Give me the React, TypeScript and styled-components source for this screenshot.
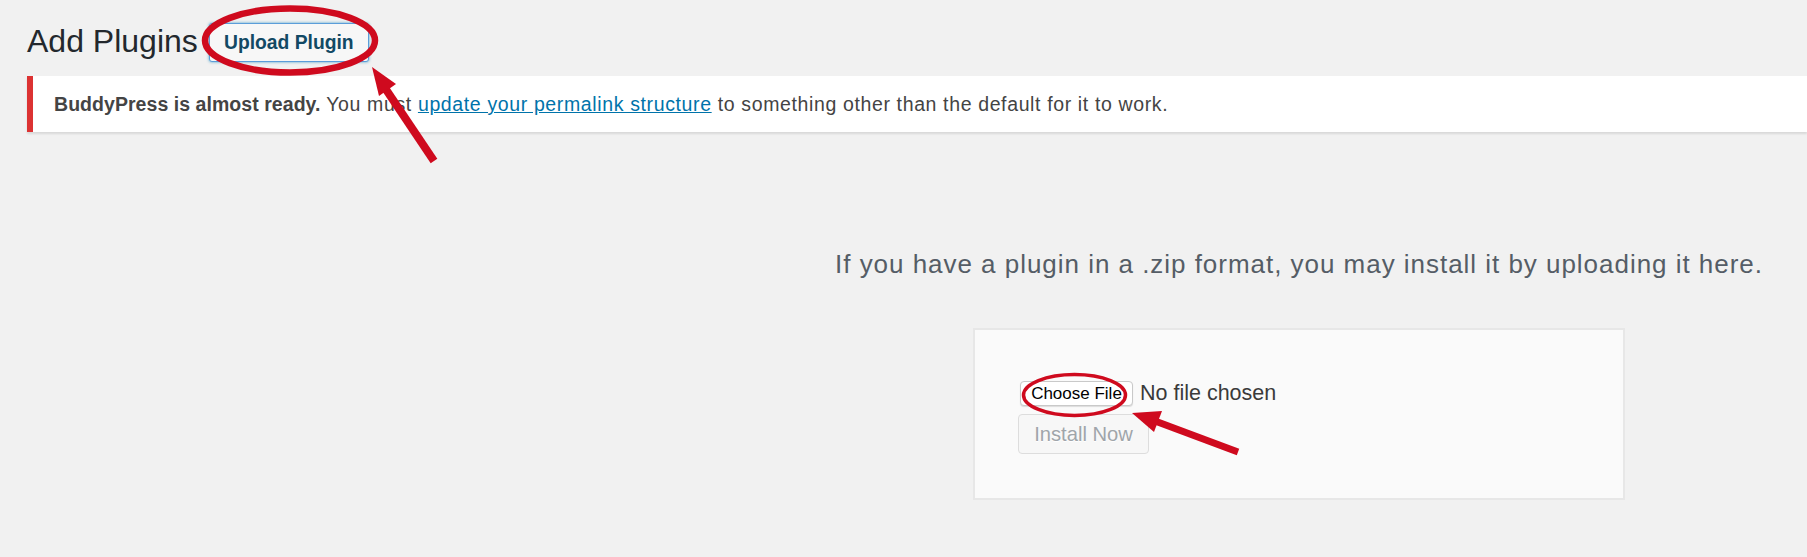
import React from "react";
import styled, { createGlobalStyle } from "styled-components";

const GlobalStyle = createGlobalStyle`
  html, body {
    margin: 0;
    padding: 0;
    background: #f1f1f1;
  }
  body {
    font-family: "Liberation Sans", Arial, Helvetica, sans-serif;
    color: #444;
  }
  * { box-sizing: border-box; }
`;

const Page = styled.div`
  position: relative;
  min-height: 557px;
  padding: 23px 0 0 27px;
  overflow: hidden;
`;

const TitleRow = styled.div`
  display: flex;
  align-items: center;
  height: 39px;
`;

const Title = styled.h1`
  margin: 0;
  font-size: 32px;
  font-weight: 400;
  line-height: 39px;
  color: #23282d;
  position: relative;
  top: -1px;
`;

const TitleAction = styled.button`
  margin-left: 11px;
  height: 39px;
  width: 160px;
  padding: 0;
  font-family: inherit;
  font-size: 19.3px;
  font-weight: 700;
  color: #124964;
  background: #f7f7f7;
  border: 1.5px solid #5b9dd9;
  border-radius: 3px;
  box-shadow: 0 0 3px rgba(30, 140, 190, 0.8);
  cursor: pointer;
`;

const Notice = styled.div`
  margin-top: 14px;
  height: 56px;
  background: #fff;
  border-left: 6px solid #dc3232;
  box-shadow: 0 2px 2px rgba(0, 0, 0, 0.1);
  padding: 14px 21px 0;
`;

const NoticeText = styled.p`
  margin: 0;
  font-size: 19.5px;
  line-height: 29px;
  color: #444;
  white-space: nowrap;
  letter-spacing: 0.63px;

  strong {
    font-weight: 700;
    letter-spacing: 0.05px;
  }
  a {
    color: #0073aa;
    text-decoration: underline;
  }
`;

const UploadSection = styled.section`
  padding-left: 764px;
  display: flex;
  flex-direction: column;
  align-items: center;
`;

const HelpText = styled.p`
  margin: 113px 0 0;
  font-size: 26px;
  letter-spacing: 0.97px;
  line-height: 38px;
  color: #555d66;
  white-space: nowrap;
  text-align: center;
`;

const UploadForm = styled.form`
  margin-top: 45px;
  width: 652px;
  height: 172px;
  background: #fafafa;
  border: 2px solid #e7e7e7;
  padding: 45px 43px 44px;
`;

const FileRow = styled.div`
  display: flex;
  align-items: center;
  height: 37px;
`;

const ChooseButton = styled.span`
  margin-left: 2px;
  width: 113px;
  height: 25px;
  display: flex;
  align-items: center;
  justify-content: center;
  font-size: 17px;
  color: #000;
  background: #fff;
  border: 1px solid #c9c9c9;
  border-radius: 4px;
  box-shadow: 0 1px 1px rgba(0, 0, 0, 0.12);
`;

const NoFile = styled.span`
  margin-left: 7px;
  font-size: 21.5px;
  color: #3a3a3a;
`;

const InstallButton = styled.button`
  margin-top: 2px;
  width: 131px;
  height: 40px;
  padding: 0;
  font-family: inherit;
  font-size: 20.2px;
  color: #a0a5aa;
  background: #f7f7f7;
  border: 1.5px solid #ddd;
  border-radius: 4px;
  text-shadow: 0 1px 0 #fff;
`;

const Annotations = styled.svg`
  position: absolute;
  top: 0;
  left: 0;
  width: 1807px;
  height: 557px;
  pointer-events: none;
`;

const RED = "#cf0a1e";

export default function App() {
  return (
    <>
      <GlobalStyle />
      <Page>
        <TitleRow>
          <Title>Add Plugins</Title>
          <TitleAction type="button">Upload Plugin</TitleAction>
        </TitleRow>

        <Notice>
          <NoticeText>
            <strong>BuddyPress is almost ready.</strong> You must{" "}
            <a href="#permalinks">update your permalink structure</a> to something other than the default for it to work.
          </NoticeText>
        </Notice>

        <UploadSection>
          <HelpText>If you have a plugin in a .zip format, you may install it by uploading it here.</HelpText>
          <UploadForm onSubmit={(e) => e.preventDefault()}>
            <FileRow>
              <ChooseButton>Choose File</ChooseButton>
              <NoFile>No file chosen</NoFile>
            </FileRow>
            <InstallButton type="submit" disabled>
              Install Now
            </InstallButton>
          </UploadForm>
        </UploadSection>

        <Annotations viewBox="0 0 1807 557">
          <ellipse cx="290" cy="40.5" rx="85" ry="32" fill="none" stroke={RED} strokeWidth="6.5" />
          <line x1="434" y1="161" x2="385" y2="88" stroke={RED} strokeWidth="8" />
          <polygon points="372,67 396,84 379,96" fill={RED} />

          <ellipse cx="1074.5" cy="395" rx="51" ry="20.5" fill="none" stroke={RED} strokeWidth="3.5" />
          <line x1="1238" y1="452" x2="1155" y2="421" stroke={RED} strokeWidth="7" />
          <polygon points="1132,413 1162,411 1154,432" fill={RED} />
        </Annotations>
      </Page>
    </>
  );
}
